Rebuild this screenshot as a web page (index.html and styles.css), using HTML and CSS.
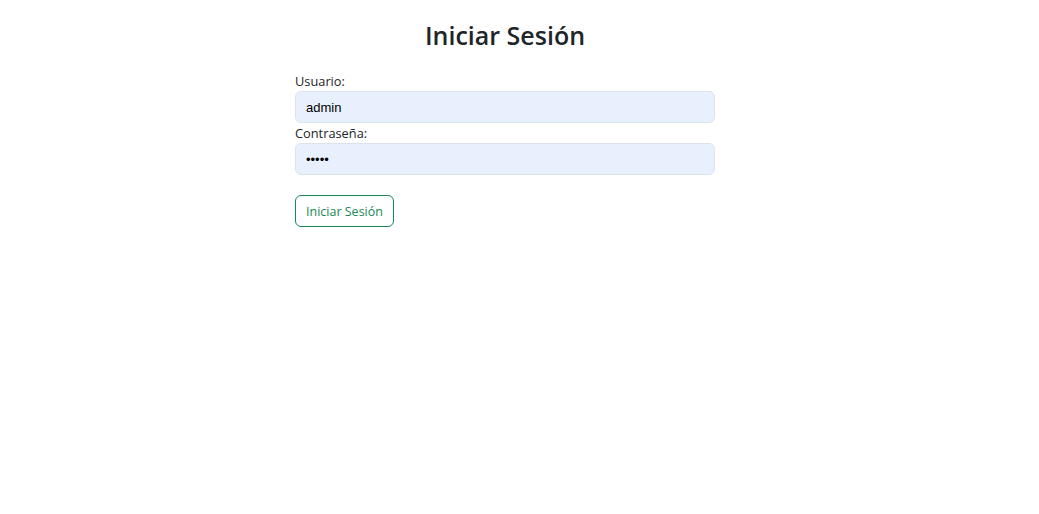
FILE: index.html
```html
<!DOCTYPE html>
<html lang="es">
<head>
<meta charset="utf-8">
<title>Iniciar Sesión</title>
<link rel="stylesheet" href="styles.css">
</head>
<body>
<main class="page">
  <form class="login">
    <h2 class="title">Iniciar Sesión</h2>
    <label class="label" for="u">Usuario:</label>
    <input class="field" id="u" type="text" value="admin">
    <label class="label" for="p">Contraseña:</label>
    <input class="field" id="p" type="password" value="admin">
    <button class="btn" type="button">Iniciar Sesión</button>
  </form>
</main>
</body>
</html>
```

FILE: styles.css
```css
html, body { margin: 0; padding: 0; background: #fff; }
body {
  font-family: "Open Sans", "Noto Sans", sans-serif;
  color: #212529;
}
.page { padding-left: 295px; padding-top: 13px; }
.login { width: 420px; display: flex; flex-direction: column; align-items: flex-start; }
.title {
  align-self: stretch;
  text-align: center;
  margin: 2px 0 16px 0;
  font-size: 25px;
  font-weight: 600;
  line-height: 40px;
  color: #212529;
}
.label {
  font-size: 12.8px;
  line-height: 20px;
  height: 20px;
  color: #212529;
}
.field {
  box-sizing: border-box;
  width: 420px;
  height: 32px;
  margin: 0;
  padding: 0 10px;
  border: 1px solid #dde3ec;
  border-radius: 6px;
  background: #e8f0fe;
  font-family: "Liberation Sans", Arial, sans-serif;
  font-size: 13px;
  color: #000;
  outline: none;
}
.btn {
  margin-top: 20px;
  box-sizing: border-box;
  height: 32px;
  padding: 0 10px;
  background: #fff;
  border: 1px solid #198754;
  border-radius: 6px;
  color: #198754;
  font-family: "Open Sans", "Noto Sans", sans-serif;
  font-size: 12.5px;
}
```
